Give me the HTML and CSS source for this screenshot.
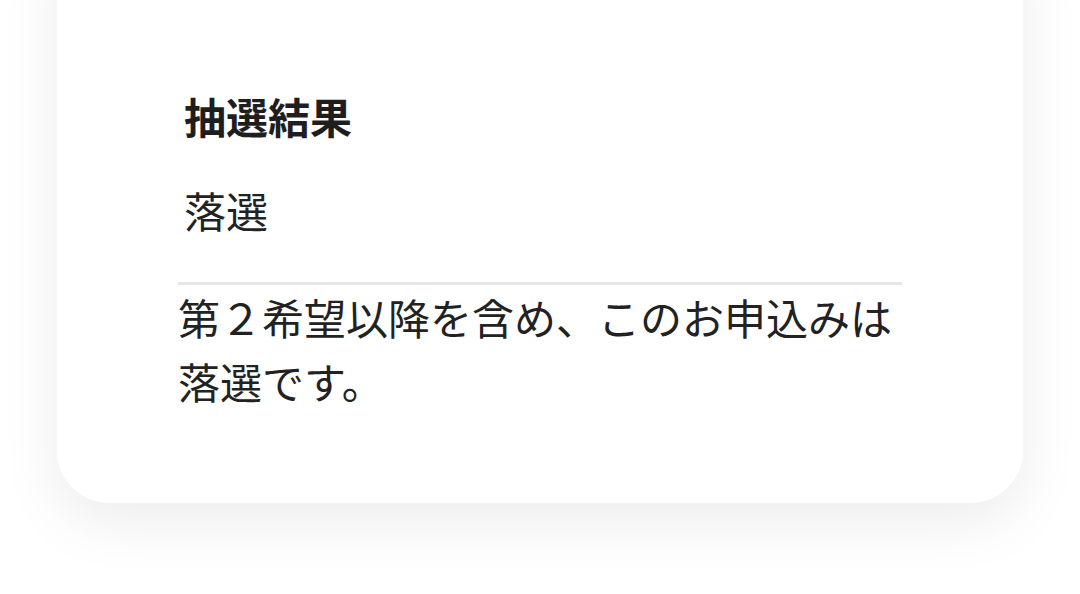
FILE: index.html
```html
<!DOCTYPE html>
<html lang="ja">
  <head>
    <meta charset="UTF-8">
    <title>抽選結果</title>
    <link rel="stylesheet" href="styles.css">
  </head>
  <body>
    <div class="card">
      <div class="result">
        <h2 class="result-title">抽選結果</h2>
        <p class="result-value">落選</p>
      </div>
      <p class="result-note">第２希望以降を含め、このお申込みは落選です。</p>
    </div>
  </body>
</html>
```

FILE: styles.css
```css
html
{
  background-color:#ffffff;
}
body
{
  margin:0;
  padding-bottom:120px;
  font-family:"Noto Sans CJK JP", "Noto Sans", sans-serif;
  color:#222222;
  background-color:#ffffff;
}
.card
{
  width:966px;
  margin:-60px 0 0 57px;
  padding:144px 121px 90px 121px;
  box-sizing:border-box;
  background-color:#ffffff;
  border-radius:0 0 52px 52px;
  box-shadow:0 18px 60px rgba(0,0,0,0.08);
}
.result
{
  padding:0 6px 41px 6px;
  border-bottom:3px solid #e6e6e6;
}
.result-title
{
  margin:0;
  font-size:42px;
  line-height:63px;
  font-weight:700;
  color:#1e1e1e;
}
.result-value
{
  margin:31px 0 0 0;
  font-size:42px;
  line-height:63px;
}
.result-note
{
  margin:0;
  font-size:42px;
  line-height:64px;
}
```
